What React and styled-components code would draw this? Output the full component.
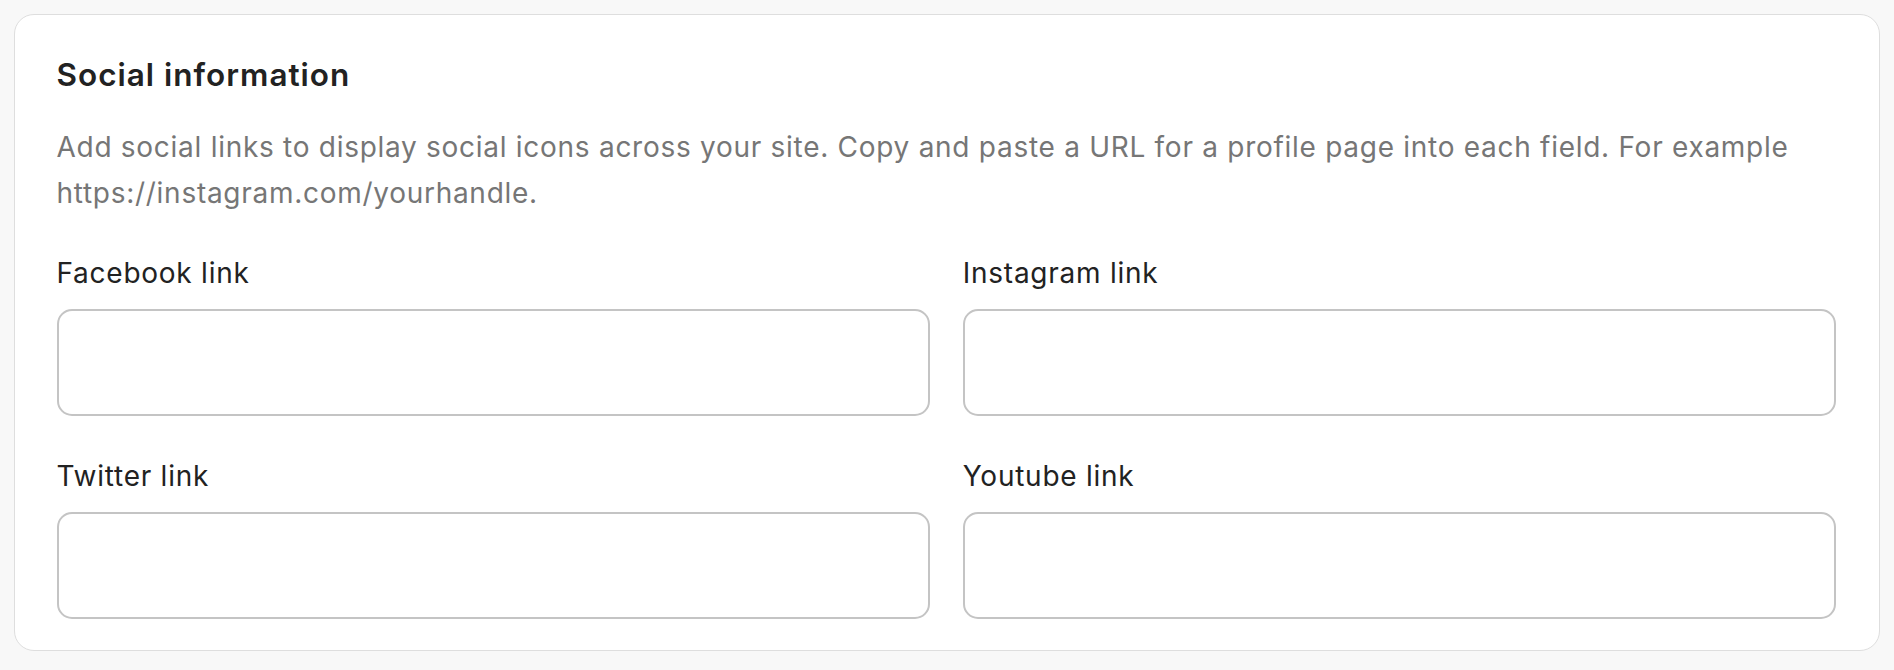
import React from 'react';
import styled, { createGlobalStyle } from 'styled-components';

const GlobalStyle = createGlobalStyle`
  html, body {
    margin: 0;
    padding: 0;
    background: #f8f8f8;
    font-family: Inter, "Noto Sans", sans-serif;
  }
`;

const Page = styled.div`
  padding: 14px;
`;

const Card = styled.section`
  background: #fff;
  border: 1.5px solid #dedede;
  border-radius: 20px;
  padding: 38.5px 43px 31.5px 41.5px;
`;

const Title = styled.h2`
  margin: 0;
  font-size: 31.5px;
  line-height: 41px;
  font-weight: 600;
  letter-spacing: 1px;
  color: #222;
`;

const Description = styled.p`
  margin: 29px 0 0;
  font-size: 28px;
  line-height: 46px;
  letter-spacing: 0.72px;
  color: #767676;
`;

const FieldGrid = styled.div`
  display: grid;
  grid-template-columns: 1fr 1fr;
  column-gap: 33px;
  row-gap: 39px;
  margin-top: 36px;
`;

const Field = styled.label`
  display: flex;
  flex-direction: column;
  gap: 15px;
`;

const Label = styled.span`
  font-size: 28px;
  line-height: 42px;
  letter-spacing: 0.75px;
  color: #222;
`;

const Input = styled.input`
  box-sizing: border-box;
  height: 107px;
  width: 100%;
  border: 2px solid #c4c4c4;
  border-radius: 15px;
  background: #fff;
  padding: 0 24px;
  font: inherit;
  font-size: 28px;
  outline: none;
`;

const fields = ['Facebook link', 'Instagram link', 'Twitter link', 'Youtube link'];

const App = () => {
  return (
    <Page>
      <GlobalStyle />
      <Card>
        <Title>Social information</Title>
        <Description>
          Add social links to display social icons across your site. Copy and paste a URL for a
          profile page into each field. For example https://instagram.com/yourhandle.
        </Description>
        <FieldGrid>
          {fields.map((name) => (
            <Field key={name}>
              <Label>{name}</Label>
              <Input type="text" />
            </Field>
          ))}
        </FieldGrid>
      </Card>
    </Page>
  );
};

export default App;
